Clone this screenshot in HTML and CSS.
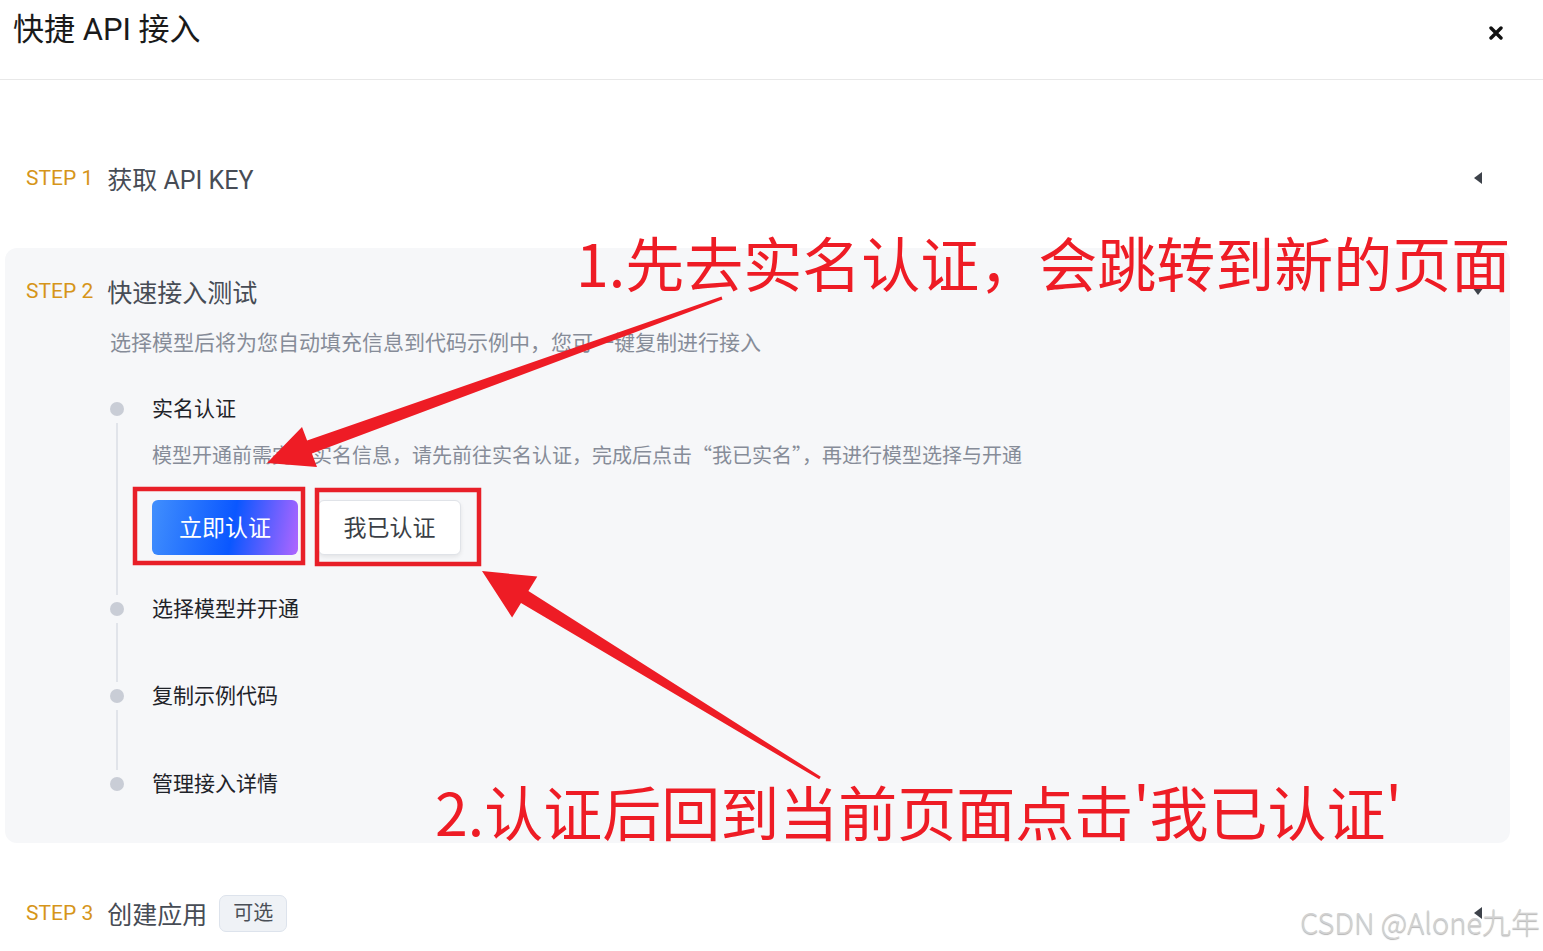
FILE: index.html
```html
<!DOCTYPE html>
<html lang="zh-CN">
<head>
    <meta charset="UTF-8">
    <meta name="viewport" content="width=device-width, initial-scale=1.0">
    <title>快捷 API 接入</title>
    <link rel="stylesheet" href="styles.css">
</head>
<body>
    <div class="page">
        <header class="header">
            <h1 class="header-title">快捷 API 接入</h1>
            <button class="close-button" aria-label="关闭">
                <svg width="14" height="14" viewBox="0 0 14 14">
                    <path d="M2 2 L12 12 M12 2 L2 12" stroke="#111" stroke-width="3.4" stroke-linecap="round"/>
                </svg>
            </button>
        </header>

        <div class="steps">
            <section class="step">
                <div class="step-head">
                    <span class="step-label">STEP 1</span>
                    <span class="step-title">获取 API KEY</span>
                    <span class="caret caret-left"></span>
                </div>
            </section>

            <section class="step step-open">
                <div class="step-head">
                    <span class="step-label">STEP 2</span>
                    <span class="step-title">快速接入测试</span>
                    <span class="caret caret-down"></span>
                </div>
                <p class="step-desc">选择模型后将为您自动填充信息到代码示例中，您可一键复制进行接入</p>

                <ul class="timeline">
                    <li class="tl-item">
                        <div class="tl-rail"><span class="tl-dot"></span><span class="tl-line"></span></div>
                        <div class="tl-body">
                            <div class="tl-title">实名认证</div>
                            <div class="tl-desc">模型开通前需完善实名信息，请先前往实名认证，完成后点击“我已实名”，再进行模型选择与开通</div>
                            <div class="tl-actions">
                                <button class="btn btn-primary">立即认证</button>
                                <button class="btn btn-default">我已认证</button>
                            </div>
                        </div>
                    </li>
                    <li class="tl-item tl-short">
                        <div class="tl-rail"><span class="tl-dot"></span><span class="tl-line"></span></div>
                        <div class="tl-body">
                            <div class="tl-title">选择模型并开通</div>
                        </div>
                    </li>
                    <li class="tl-item tl-short">
                        <div class="tl-rail"><span class="tl-dot"></span><span class="tl-line"></span></div>
                        <div class="tl-body">
                            <div class="tl-title">复制示例代码</div>
                        </div>
                    </li>
                    <li class="tl-item tl-last">
                        <div class="tl-rail"><span class="tl-dot"></span></div>
                        <div class="tl-body">
                            <div class="tl-title">管理接入详情</div>
                        </div>
                    </li>
                </ul>
            </section>

            <section class="step">
                <div class="step-head">
                    <span class="step-label">STEP 3</span>
                    <span class="step-title">创建应用</span>
                    <span class="tag">可选</span>
                    <span class="caret caret-left"></span>
                </div>
            </section>
        </div>

        <!-- annotations drawn over the screenshot -->
        <svg class="marks" width="1543" height="951" viewBox="0 0 1543 951">
            <rect x="135" y="489" width="168" height="74" fill="none" stroke="#e81f28" stroke-width="4.5"/>
            <rect x="317" y="490" width="162" height="74" fill="none" stroke="#e81f28" stroke-width="4.5"/>
            <polygon fill="#ee1c25" points="721.5,296.6 307.1,440.4 302,427 267,463 317,467 311.9,453.6 722.5,299.4"/>
            <polygon fill="#ee1c25" points="820.8,776.7 528.4,591.1 537.3,576.6 482,571 512.1,617.6 521,603.1 819.2,779.3"/>
        </svg>
        <div class="note note-one">1.先去实名认证，会跳转到新的页面</div>
        <div class="note note-two">2.认证后回到当前页面点击'我已认证'</div>

        <div class="watermark">CSDN @Alone九年</div>
    </div>
</body>
</html>
```

FILE: styles.css
```css
* {
    margin: 0;
    padding: 0;
    box-sizing: border-box;
}

:root {
    --orange: #d6951a;
    --title: #474c55;
    --muted: #868c98;
    --text: #1f2329;
    --panel: #f6f7f9;
    --red: #ee1c25;
}

body {
    background: #fff;
    font-family: Roboto, "Noto Sans CJK SC", sans-serif;
}

.page {
    position: relative;
    width: 1543px;
    height: 951px;
    overflow: hidden;
}

.header {
    display: flex;
    justify-content: space-between;
    align-items: flex-start;
    height: 80px;
    padding: 10px 40px 0 13px;
    border-bottom: 1px solid #e8e8e8;
}

.header-title {
    font-size: 31px;
    font-weight: 400;
    line-height: 40px;
    color: #1a1a1a;
}

.close-button {
    margin-top: 16px;
    border: none;
    background: none;
    width: 14px;
    height: 14px;
    cursor: pointer;
}

.close-button svg {
    display: block;
}

.steps {
    padding-top: 70px;
}

.step {
    margin: 0 33px 42px 5px;
    padding: 0 22px 0 21px;
}

.step-open {
    background: var(--panel);
    border-radius: 12px;
    padding-top: 15px;
    padding-bottom: 45px;
}

.step-head {
    display: flex;
    align-items: center;
    height: 56px;
}

.step-label {
    font-size: 21px;
    color: var(--orange);
    margin-right: 14px;
}

.step-title {
    font-size: 25px;
    color: var(--title);
}

.caret {
    margin-left: auto;
    width: 0;
    height: 0;
}

.caret-left {
    border-top: 6px solid transparent;
    border-bottom: 6px solid transparent;
    border-right: 8px solid #3d424a;
    margin-right: 6px;
}

.caret-down {
    border-left: 6px solid transparent;
    border-right: 6px solid transparent;
    border-top: 8px solid #3d424a;
    margin-right: 4px;
}

.tag {
    margin-left: 12px;
    padding: 0 13px;
    height: 37px;
    line-height: 35px;
    font-size: 20px;
    color: #4a4f57;
    background: #eff2f6;
    border: 1px solid #dde3ec;
    border-radius: 7px;
}

.step-desc {
    margin: 10px 0 0 84px;
    font-size: 21px;
    line-height: 28px;
    color: var(--muted);
}

.timeline {
    list-style: none;
    margin: 38px 0 0 77px;
}

.tl-item {
    display: flex;
    gap: 21px;
}

.tl-rail {
    display: flex;
    flex-direction: column;
    align-items: center;
    width: 28px;
}

.tl-dot {
    width: 14px;
    height: 14px;
    margin-top: 7px;
    border-radius: 50%;
    background: #c9cdd6;
}

.tl-line {
    flex: 1;
    width: 2px;
    margin-top: 7px;
    background: #e1e4ea;
}

.tl-body {
    padding-bottom: 40px;
}

.tl-short .tl-body {
    padding-bottom: 59px;
}

.tl-item:nth-child(3) .tl-body {
    padding-bottom: 60px;
}

.tl-last .tl-body {
    padding-bottom: 0;
}

.tl-title {
    font-size: 21px;
    line-height: 28px;
    color: var(--text);
}

.tl-desc {
    margin-top: 18px;
    font-family: "Noto Sans CJK SC", Roboto, sans-serif;
    font-size: 20px;
    line-height: 28px;
    color: var(--muted);
}

.tl-actions {
    display: flex;
    gap: 20px;
    margin-top: 31px;
}

.btn {
    height: 55px;
    padding-bottom: 3px;
    border-radius: 6px;
    font-family: Roboto, "Noto Sans CJK SC", sans-serif;
    font-size: 23px;
    cursor: pointer;
}

.btn-primary {
    width: 146px;
    border: none;
    color: #fff;
    background: linear-gradient(100deg, #418ffd 0%, #0a57ff 55%, #b066ff 100%);
}

.btn-default {
    width: 143px;
    color: #3b3f46;
    background: #fff;
    border: 1px solid #e0e3e8;
    box-shadow: 0 2px 4px rgba(0,0,0,0.08);
}

.marks {
    position: absolute;
    left: 0;
    top: 0;
    pointer-events: none;
}

.note {
    position: absolute;
    font-family: "Noto Sans CJK SC", sans-serif;
    font-size: 59px;
    line-height: 1;
    color: var(--red);
    white-space: nowrap;
}

.note-one {
    left: 576px;
    top: 232px;
}

.note-two {
    left: 435px;
    top: 781px;
}

.watermark {
    position: absolute;
    right: 3px;
    bottom: 9px;
    font-family: "Noto Sans CJK SC", sans-serif;
    font-size: 29px;
    font-weight: 300;
    color: #d2d2d2;
    text-shadow: 0 1px 1px rgba(0,0,0,0.3);
}
```
